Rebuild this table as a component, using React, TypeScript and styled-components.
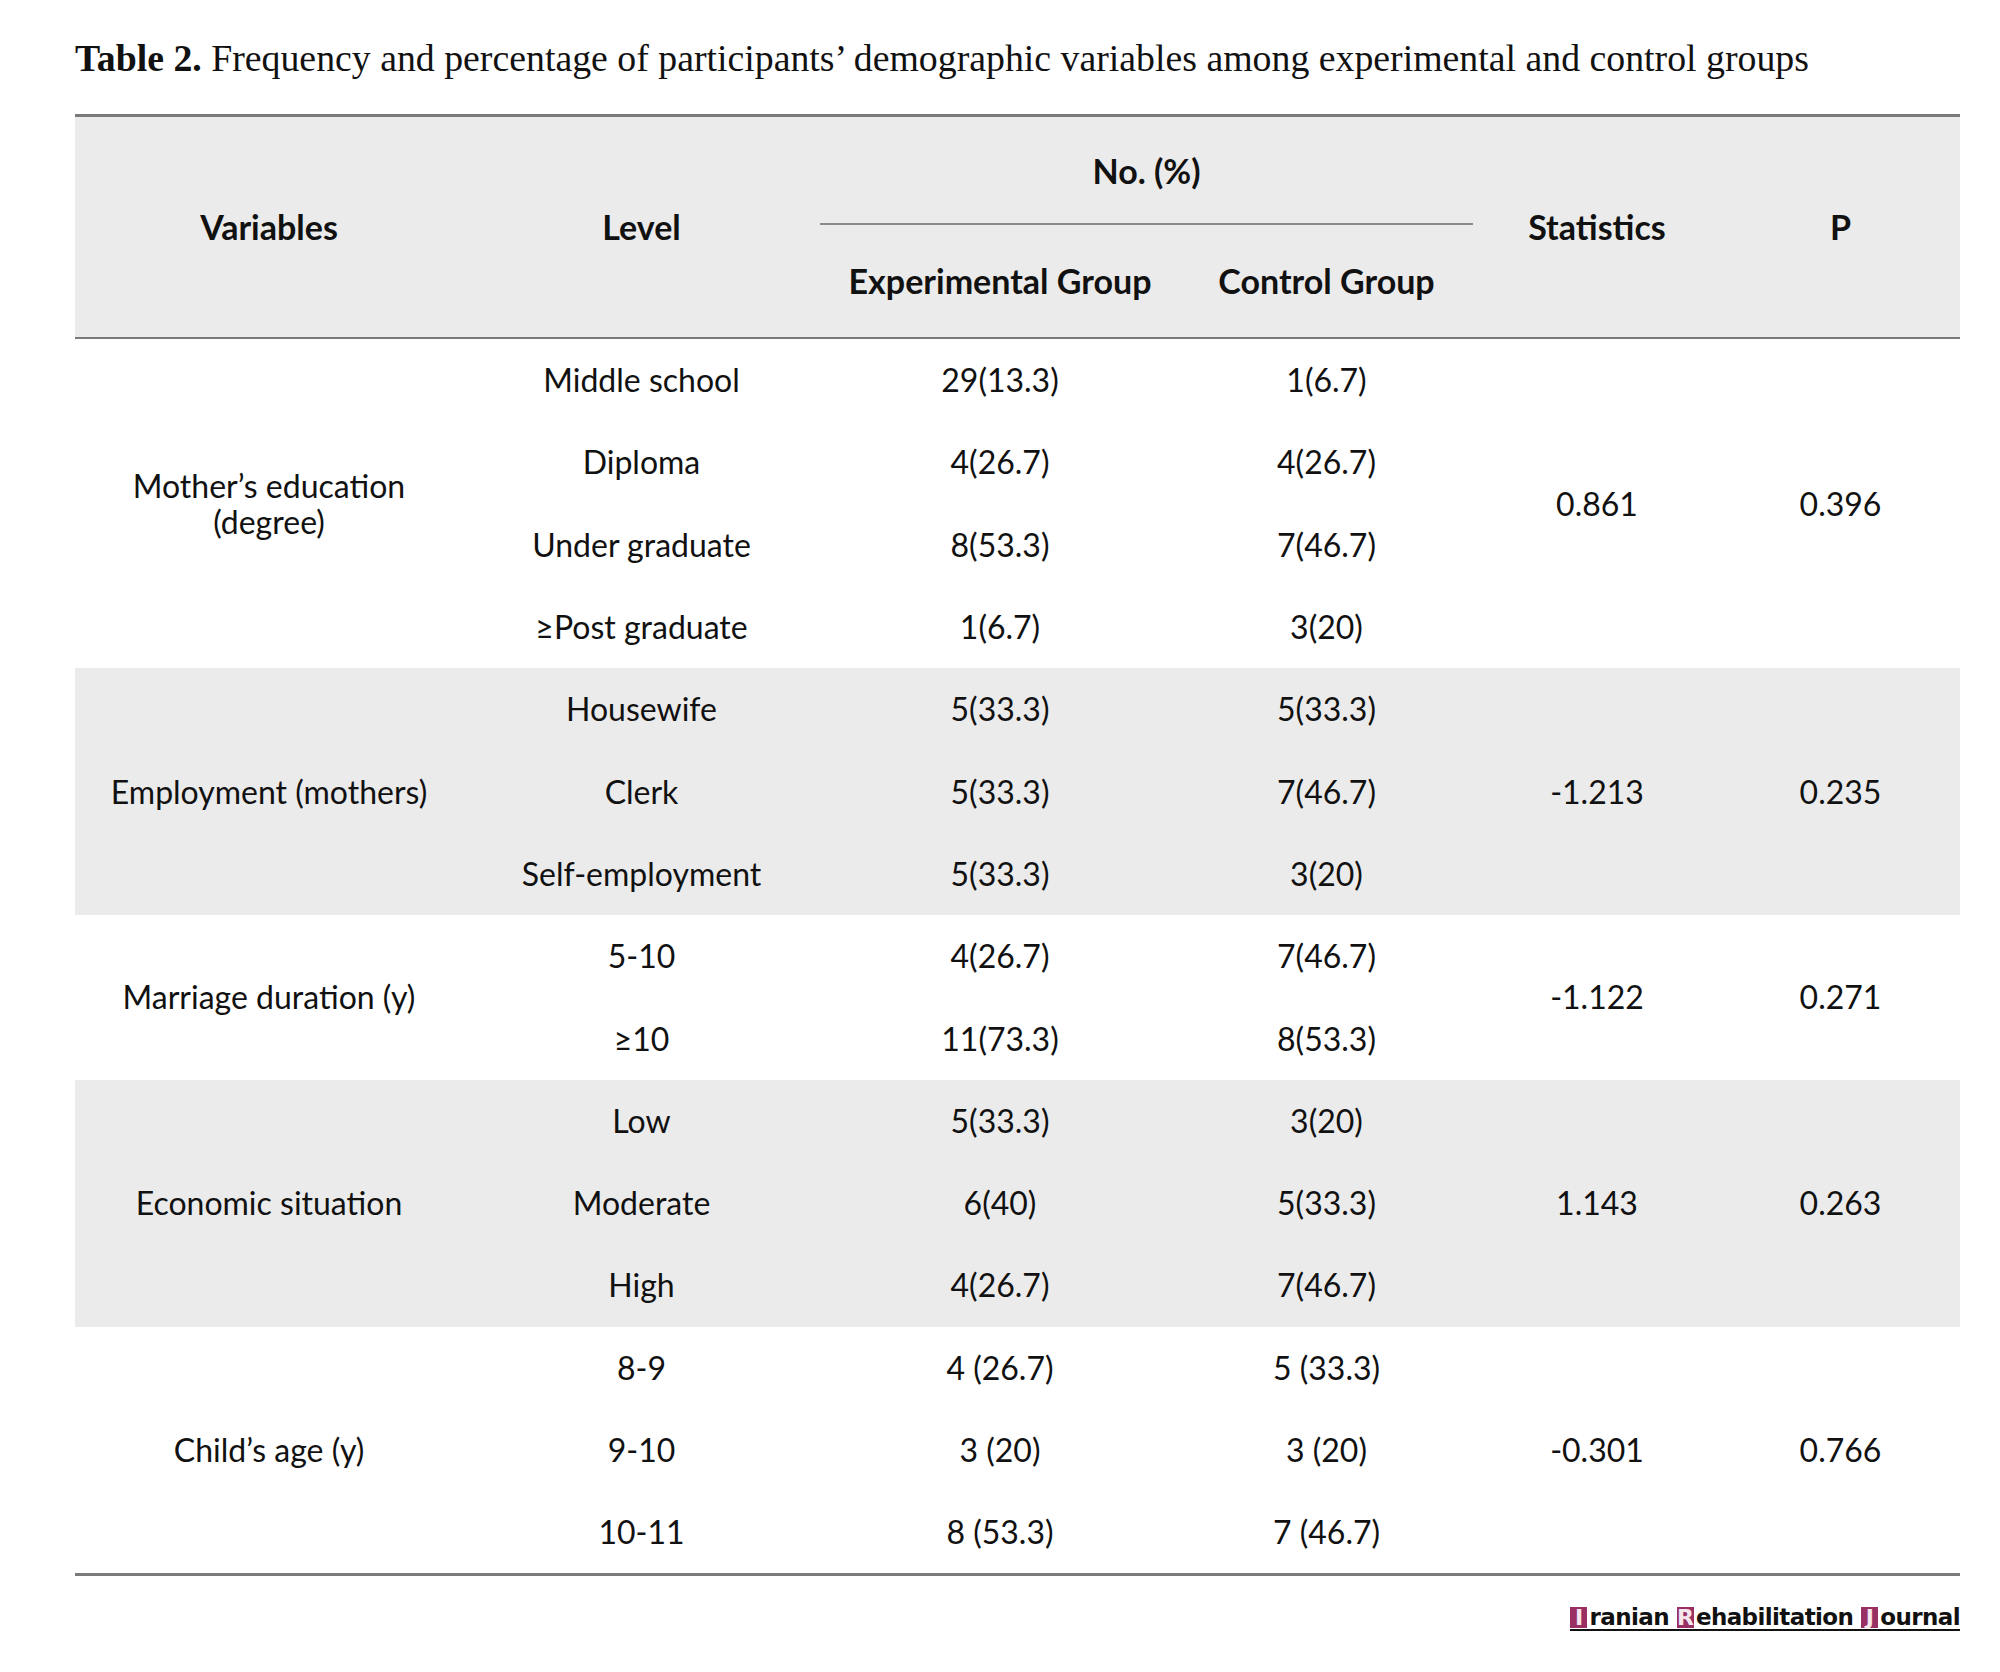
import React from "react";
import styled, { createGlobalStyle } from "styled-components";

const GlobalStyle = createGlobalStyle`
  html, body { margin: 0; padding: 0; background: #ffffff; }
  body { width: 2000px; height: 1672px; overflow: hidden; }
`;

const Page = styled.div`
  width: 1885px;
  padding: 37px 0 0 75px;
  box-sizing: content-box;
`;

const Caption = styled.div`
  font-family: "Liberation Serif", serif;
  font-size: 37.8px;
  color: #111;
  height: 77px;
  line-height: 42px;
  white-space: nowrap;
  b { font-weight: 700; }
`;

const Table = styled.table`
  width: 1885px;
  border-collapse: collapse;
  table-layout: fixed;
  font-family: "Lato", "Open Sans", sans-serif;
  color: #111;
  border-top: 3px solid #7a7a7a;
  border-bottom: 3px solid #7a7a7a;
`;

const Head = styled.thead`
  background: #ebebeb;
  border-bottom: 2px solid #7a7a7a;
`;

const Th = styled.th<{ $h: number }>`
  height: ${(p) => p.$h}px;
  padding: 0;
  font-weight: 700;
  font-size: 34px;
  line-height: 1;
  text-align: center;
  vertical-align: middle;
`;

const SpanTh = styled(Th)`
  position: relative;
  &::after {
    content: "";
    position: absolute;
    left: 0;
    right: 0;
    bottom: 0;
    height: 2px;
    background: #8a8a8a;
  }
`;

const Body = styled.tbody<{ $shade: boolean }>`
  background: ${(p) => (p.$shade ? "#ebebeb" : "#ffffff")};
`;

const Td = styled.td`
  height: 82.3px;
  padding: 0;
  font-size: 32px;
  text-align: center;
  vertical-align: middle;
  line-height: 1;
`;

const VarTd = styled(Td)`
  line-height: 36px;
`;

const Footer = styled.div`
  display: flex;
  justify-content: flex-end;
  padding-top: 30px;
`;

const Logo = styled.div`
  display: flex;
  align-items: flex-end;
  font-family: "DejaVu Sans", sans-serif;
  font-weight: 700;
  font-size: 23px;
  letter-spacing: -0.6px;
  color: #111;
  line-height: 22px;
  border-bottom: 2px solid #111;
  padding-bottom: 1px;
`;

const LogoBox = styled.span`
  display: inline-flex;
  justify-content: center;
  align-items: flex-end;
  background: #9a2f63;
  color: #f5e6ee;
  width: 17px;
  height: 21px;
  margin-right: 2px;
  font-size: 22px;
  line-height: 20px;
  letter-spacing: 0;
`;

const LogoWord = styled.span`
  margin-right: 8px;
  &:last-child { margin-right: 0; }
`;

type Group = {
  name: React.ReactNode;
  stat: string;
  p: string;
  rows: [string, string, string][];
};

const groups: Group[] = [
  {
    name: (
      <>
        Mother’s education
        <br />
        (degree)
      </>
    ),
    stat: "0.861",
    p: "0.396",
    rows: [
      ["Middle school", "29(13.3)", "1(6.7)"],
      ["Diploma", "4(26.7)", "4(26.7)"],
      ["Under graduate", "8(53.3)", "7(46.7)"],
      ["≥Post graduate", "1(6.7)", "3(20)"],
    ],
  },
  {
    name: "Employment (mothers)",
    stat: "-1.213",
    p: "0.235",
    rows: [
      ["Housewife", "5(33.3)", "5(33.3)"],
      ["Clerk", "5(33.3)", "7(46.7)"],
      ["Self-employment", "5(33.3)", "3(20)"],
    ],
  },
  {
    name: "Marriage duration (y)",
    stat: "-1.122",
    p: "0.271",
    rows: [
      ["5-10", "4(26.7)", "7(46.7)"],
      ["≥10", "11(73.3)", "8(53.3)"],
    ],
  },
  {
    name: "Economic situation",
    stat: "1.143",
    p: "0.263",
    rows: [
      ["Low", "5(33.3)", "3(20)"],
      ["Moderate", "6(40)", "5(33.3)"],
      ["High", "4(26.7)", "7(46.7)"],
    ],
  },
  {
    name: "Child’s age (y)",
    stat: "-0.301",
    p: "0.766",
    rows: [
      ["8-9", "4 (26.7)", "5 (33.3)"],
      ["9-10", "3 (20)", "3 (20)"],
      ["10-11", "8 (53.3)", "7 (46.7)"],
    ],
  },
];

export default function App() {
  return (
    <>
      <GlobalStyle />
      <Page>
        <Caption>
          <b>Table 2.</b> Frequency and percentage of participants’ demographic variables among experimental and control groups
        </Caption>
        <Table>
          <colgroup>
            <col style={{ width: 388 }} />
            <col style={{ width: 357 }} />
            <col style={{ width: 360 }} />
            <col style={{ width: 293 }} />
            <col style={{ width: 248 }} />
            <col style={{ width: 239 }} />
          </colgroup>
          <Head>
            <tr>
              <Th $h={108} rowSpan={2}>Variables</Th>
              <Th $h={108} rowSpan={2}>Level</Th>
              <SpanTh $h={108} colSpan={2}>No. (%)</SpanTh>
              <Th $h={108} rowSpan={2}>Statistics</Th>
              <Th $h={108} rowSpan={2}>P</Th>
            </tr>
            <tr>
              <Th $h={112}>Experimental Group</Th>
              <Th $h={112}>Control Group</Th>
            </tr>
          </Head>
          {groups.map((g, gi) => (
            <Body key={gi} $shade={gi % 2 === 1}>
              {g.rows.map((r, ri) => (
                <tr key={ri}>
                  {ri === 0 && <VarTd rowSpan={g.rows.length}>{g.name}</VarTd>}
                  <Td>{r[0]}</Td>
                  <Td>{r[1]}</Td>
                  <Td>{r[2]}</Td>
                  {ri === 0 && <Td rowSpan={g.rows.length}>{g.stat}</Td>}
                  {ri === 0 && <Td rowSpan={g.rows.length}>{g.p}</Td>}
                </tr>
              ))}
            </Body>
          ))}
        </Table>
        <Footer>
          <Logo>
            <LogoBox>I</LogoBox>
            <LogoWord>ranian</LogoWord>
            <LogoBox>R</LogoBox>
            <LogoWord>ehabilitation</LogoWord>
            <LogoBox>J</LogoBox>
            <LogoWord>ournal</LogoWord>
          </Logo>
        </Footer>
      </Page>
    </>
  );
}
